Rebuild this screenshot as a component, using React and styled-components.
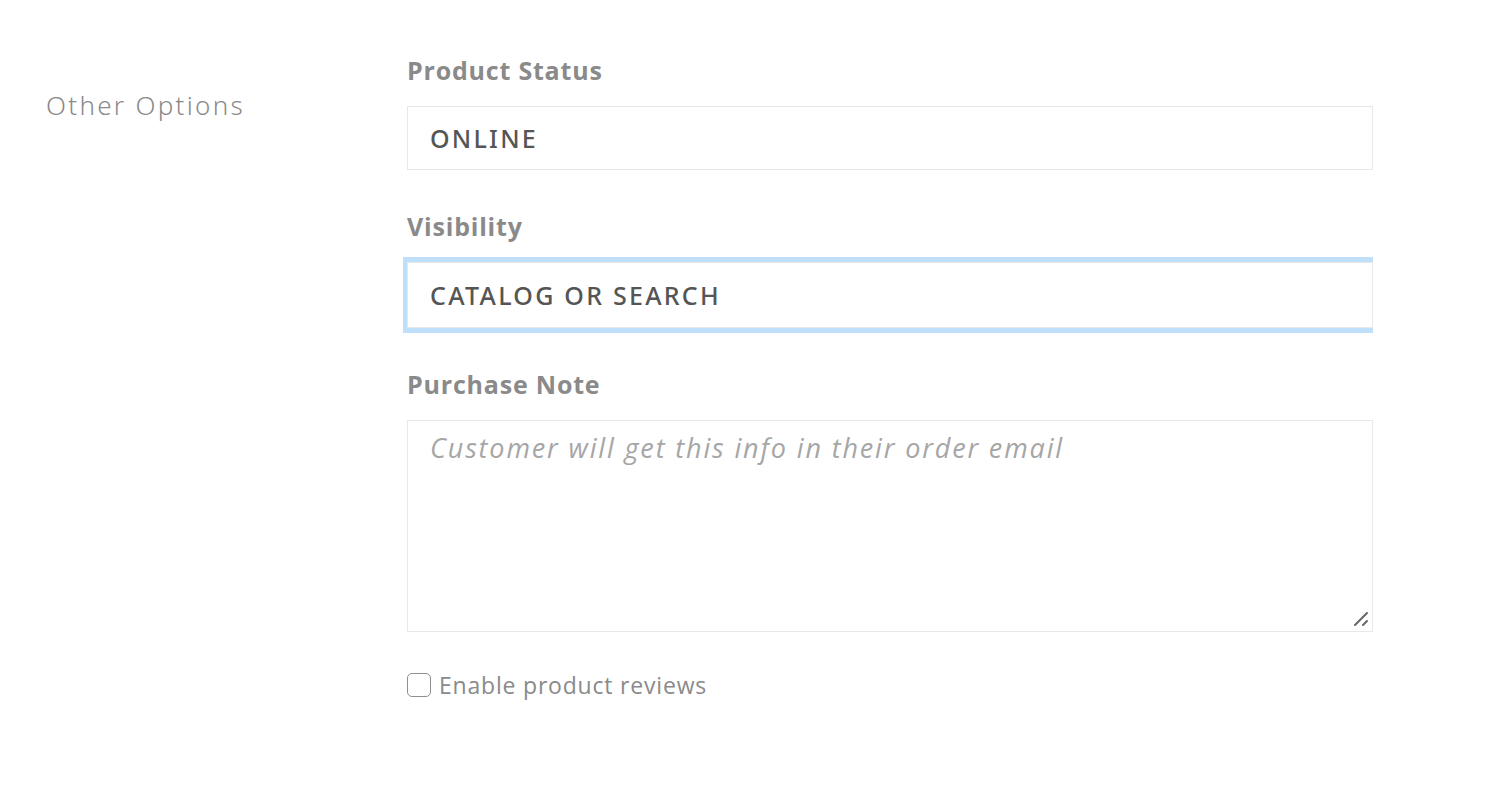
import React from "react";
import styled, { createGlobalStyle } from "styled-components";

const GlobalStyle = createGlobalStyle`
  body {
    margin: 0;
    background: #ffffff;
    font-family: "Open Sans", "Noto Sans", sans-serif;
  }
`;

const Section = styled.div`
  display: grid;
  grid-template-columns: 357px 970px;
  padding: 50px 0 0 46px;
`;

const SectionTitle = styled.h2`
  margin: 37px 0 0;
  font-family: "Noto Sans", sans-serif;
  font-weight: 300;
  font-size: 26px;
  color: #8a8a8a;
  letter-spacing: 2.3px;
`;

const Fields = styled.div`
  overflow: hidden;
  padding: 4px 0 20px 4px;
`;

const Field = styled.div`
  display: flex;
  flex-direction: column;
  margin-bottom: 40px;
`;

const Label = styled.label`
  font-family: "Open Sans", sans-serif;
  font-weight: 700;
  font-size: 25px;
  line-height: 32px;
  color: #8a8a8a;
  margin-bottom: 20px;
  letter-spacing: 0.8px;
`;

const Select = styled.div`
  box-sizing: border-box;
  height: ${p => (p.$focused ? 66 : 64)}px;
  width: 966px;
  border: 1px solid #e8e8e8;
  display: flex;
  align-items: center;
  padding: 0 22px;
  font-family: "Noto Sans", sans-serif;
  font-weight: 500;
  font-size: 25px;
  letter-spacing: 2.25px;
  color: #555555;
  box-shadow: ${p => (p.$focused ? "0 0 0 5px #c0dffb" : "none")};
`;

const NoteWrap = styled.div`
  position: relative;
  width: 966px;
  height: 212px;
`;

const TextArea = styled.textarea`
  box-sizing: border-box;
  display: block;
  width: 100%;
  height: 100%;
  border: 1px solid #e8e8e8;
  padding: 8px 22px;
  font-family: "Open Sans", sans-serif;
  font-style: italic;
  font-size: 27px;
  letter-spacing: 1.85px;
  color: #555;
  resize: none;
  outline: none;
  &::placeholder {
    color: #a6a6a6;
  }
`;

const Grip = styled.svg`
  position: absolute;
  right: 4px;
  bottom: 5px;
  width: 16px;
  height: 16px;
  pointer-events: none;
`;

const CheckRow = styled.label`
  display: flex;
  align-items: center;
  gap: 8px;
  margin-top: -3px;
  font-family: "Open Sans", sans-serif;
  font-size: 23px;
  letter-spacing: 0.8px;
  color: #8a8a8a;
`;

const Box = styled.span`
  box-sizing: border-box;
  width: 24px;
  height: 24px;
  border: 1.5px solid #8f8f8f;
  border-radius: 5px;
  background: #fff;
`;

export default function App() {
  return (
    <>
      <GlobalStyle />
      <Section>
        <SectionTitle>Other Options</SectionTitle>
        <Fields>
          <Field>
            <Label>Product Status</Label>
            <Select>ONLINE</Select>
          </Field>
          <Field>
            <Label>Visibility</Label>
            <Select $focused>CATALOG OR SEARCH</Select>
          </Field>
          <Field>
            <Label>Purchase Note</Label>
            <NoteWrap>
              <TextArea placeholder="Customer will get this info in their order email" />
              <Grip viewBox="0 0 16 16">
                <path d="M2 14 L14 2 M10 14 L14 10" stroke="#666" strokeWidth="2" strokeLinecap="round" />
              </Grip>
            </NoteWrap>
          </Field>
          <CheckRow>
            <Box />
            Enable product reviews
          </CheckRow>
        </Fields>
      </Section>
    </>
  );
}
